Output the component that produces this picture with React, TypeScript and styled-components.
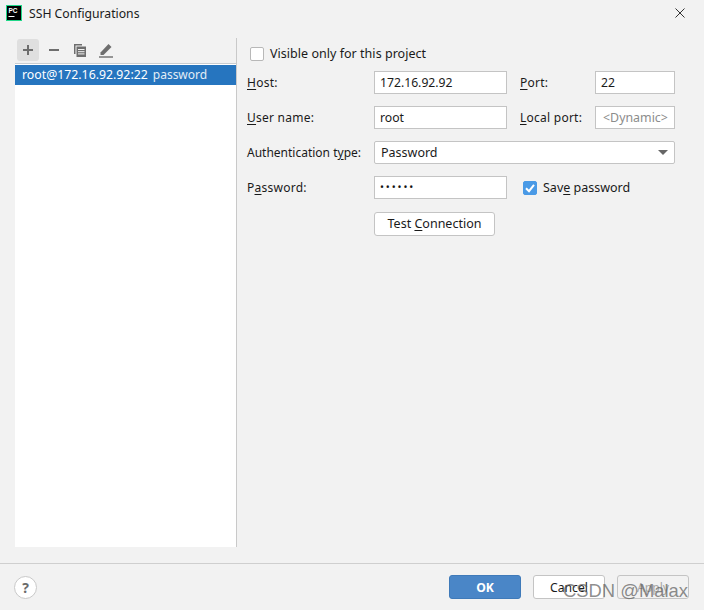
import React from "react";
import styled, { createGlobalStyle } from "styled-components";

const Global = createGlobalStyle`
  html, body { margin: 0; padding: 0; background: #f2f2f2; }
  body { font-family: "Noto Sans", "Open Sans", sans-serif; font-size: 12.5px; color: #1a1a1a; }
`;
const Dialog = styled.div`
  width: 704px; height: 610px; background: #f2f2f2; display: flex; flex-direction: column;
  position: relative; overflow: hidden;
`;
const TitleBar = styled.div`
  height: 28px; display: flex; align-items: center; padding: 0 19px 2px 6px; box-sizing: border-box; gap: 7px; flex: none;
`;
const TitleText = styled.div`
  font-size: 12.2px; flex: 1;
`;
const Body = styled.div`
  flex: none; height: 509px; margin-top: 10px; padding: 0 29px 0 15px; display: flex;
`;
const LeftPanel = styled.div`
  width: 221px; flex: none; display: flex; flex-direction: column; border-right: 1px solid #c9c9c9;
`;
const ListToolbar = styled.div`
  height: 24px; padding-left: 2px; display: flex; align-items: center; gap: 4px; flex: none;
  border-bottom: 1px solid #c9cdd1; padding-bottom: 1px;
`;
const ToolButton = styled.div<{ $active?: boolean }>`
  width: 22px; height: 22px; border-radius: 3px; display: flex; align-items: center; justify-content: center;
  background: ${(p) => (p.$active ? "#dfdfdf" : "transparent")};
`;
const List = styled.div`
  flex: 1; background: #fff; padding-top: 1px;
`;
const ListRow = styled.div`
  height: 20px; box-sizing: border-box; padding: 0 0 2px 7px; background: #2675bf; color: #fff; display: flex; align-items: center; gap: 5px;
  font-size: 12.3px; white-space: pre;
`;
const Muted = styled.span`
  color: #e3edf6; font-size: 12px;
`;
const RightPanel = styled.div`
  flex: 1; padding: 8px 0 0 10px; display: flex; flex-direction: column;
`;
const CheckRow = styled.label`
  display: flex; align-items: center; gap: 6px; height: 16px; padding-left: 3px; margin-bottom: 9px;
`;
const CheckText = styled.span`
  margin-top: -2px; letter-spacing: 0.03px;
`;
const CheckBox = styled.span<{ $checked?: boolean }>`
  width: 14px; height: 14px; border-radius: 2px; box-sizing: border-box; display: flex; align-items: center; justify-content: center; flex: none;
  background: ${(p) => (p.$checked ? "#4a9ae6" : "#fff")};
  border: 1px solid ${(p) => (p.$checked ? "#4a9ae6" : "#b8b8b8")};
`;
const FormGrid = styled.div`
  display: grid; grid-template-columns: 127px 133px 13px 75px 80px; grid-auto-rows: 23px; row-gap: 12px; align-items: center;
`;
const Label = styled.div<{ $col?: number; $wide?: boolean }>`
  grid-column: ${(p) => p.$col ?? 1}; white-space: nowrap; font-size: 12px;
  letter-spacing: ${(p) => (p.$wide ? "0.25px" : "0")};
`;
const Key = styled.span`
  text-decoration: underline; text-underline-offset: 2px;
`;
const Field = styled.div<{ $col: number; $dim?: boolean }>`
  grid-column: ${(p) => p.$col}; height: 23px; box-sizing: border-box; background: #fff; border: 1px solid #c4c4c4;
  display: flex; align-items: center;
  color: ${(p) => (p.$dim ? "#8c8c8c" : "#1a1a1a")};
  font-size: ${(p) => (p.$dim ? "12.4px" : "12.2px")};
  padding-left: ${(p) => (p.$dim ? "7px" : "5px")};
  white-space: nowrap; overflow: hidden;
`;
const Select = styled.div`
  grid-column: 2 / 6; height: 23px; box-sizing: border-box; background: #fff; border: 1px solid #c4c4c4; border-radius: 2px;
  display: flex; align-items: center; justify-content: space-between; padding: 0 6px 0 6px; font-size: 12.5px;
`;
const Arrow = styled.span`
  width: 0; height: 0; border-left: 5px solid transparent; border-right: 5px solid transparent; border-top: 5px solid #666;
`;
const SaveCheck = styled.label`
  grid-column: 4 / 6; display: flex; align-items: center; gap: 6px; padding-left: 3px; font-size: 12.5px; white-space: nowrap;
`;
const Dots = styled.span`
  letter-spacing: 1.9px; font-size: 10.5px; color: #111; margin-top: -2px;
`;
const TestButton = styled.div`
  grid-column: 2; justify-self: start; align-self: start; margin-top: 1px; width: 121px; height: 24px; box-sizing: border-box; background: #fff; border: 1px solid #c4c4c4; border-radius: 3px;
  display: flex; align-items: center; justify-content: center; font-size: 12.5px; padding-bottom: 1px;
`;
const Footer = styled.div`
  flex: 1; margin-top: 16px; border-top: 1px solid #cfcfcf; display: flex; align-items: flex-start; justify-content: space-between;
  padding: 11px 15px 0 14px;
`;
const Help = styled.div`
  width: 23px; height: 23px; box-sizing: border-box; margin-top: 1px; border-radius: 50%; background: #fff; border: 1px solid #c9c9c9; color: #6b6b6b;
  display: flex; align-items: center; justify-content: center; font-size: 14px; font-weight: 700;
`;
const Buttons = styled.div`
  display: flex; gap: 12px;
`;
const DialogButton = styled.div<{ $kind?: "primary" | "disabled" }>`
  width: 72px; height: 24px; box-sizing: border-box; border-radius: 3px; display: flex; align-items: center; justify-content: center; font-size: 12.2px;
  background: ${(p) => (p.$kind === "primary" ? "#4a86c7" : p.$kind === "disabled" ? "#f2f2f2" : "#fff")};
  border: 1px solid ${(p) => (p.$kind === "primary" ? "#3f7ab9" : "#c4c4c4")};
  color: ${(p) => (p.$kind === "primary" ? "#fff" : p.$kind === "disabled" ? "#a8a8a8" : "#1a1a1a")};
  font-weight: ${(p) => (p.$kind === "primary" ? 700 : 400)};
`;
const Watermark = styled.div`
  position: absolute; left: 563px; top: 581px; font-size: 18.4px; line-height: 20px; color: rgba(85, 85, 85, 0.68); white-space: nowrap;
  font-family: "Liberation Sans", sans-serif;
`;

const Logo = () => (
  <svg width="16" height="16" viewBox="0 0 16 16">
    <rect x="0.5" y="0.5" width="15" height="15" fill="#000" stroke="#21d789" />
    <text x="2.5" y="8" fontSize="6.5" fontWeight="700" fill="#fff" fontFamily="Liberation Sans">PC</text>
    <rect x="2.5" y="11" width="6" height="1" fill="#fff" />
  </svg>
);
const Check = () => (
  <svg width="12" height="12" viewBox="0 0 12 12"><path d="M2 6.2 L5 9.2 L10 2.8" fill="none" stroke="#fff" strokeWidth="2" /></svg>
);

export default function App() {
  return (
    <Dialog>
      <Global />
      <TitleBar>
        <Logo />
        <TitleText>SSH Configurations</TitleText>
        <svg width="10" height="10" viewBox="0 0 10 10"><path d="M0.5 0.5 L9.5 9.5 M9.5 0.5 L0.5 9.5" stroke="#333" strokeWidth="1" fill="none" /></svg>
      </TitleBar>
      <Body>
        <LeftPanel>
          <ListToolbar>
            <ToolButton $active>
              <svg width="12" height="12" viewBox="0 0 12 12"><path d="M6 1 V11 M1 6 H11" stroke="#6e6e6e" strokeWidth="2" /></svg>
            </ToolButton>
            <ToolButton>
              <svg width="12" height="12" viewBox="0 0 12 12"><path d="M1 6 H11" stroke="#6e6e6e" strokeWidth="2" /></svg>
            </ToolButton>
            <ToolButton>
              <svg width="14" height="15" viewBox="0 0 14 15"><path d="M1 1 H9 V2.5 H2.5 V11 H1 Z" fill="#6e6e6e" /><path d="M3.5 3.5 H13 V14 H3.5 Z" fill="#6e6e6e" /><path d="M5 6.5 H11.5 M5 8.7 H11.5 M5 10.9 H11.5" stroke="#f2f2f2" strokeWidth="1" /></svg>
            </ToolButton>
            <ToolButton>
              <svg width="16" height="16" viewBox="0 0 16 16"><path d="M2.5 10.5 L10.5 2 L13.5 5 L5.5 13 H2.5 Z" fill="#6e6e6e" /><path d="M1 15 H15" stroke="#6e6e6e" strokeWidth="1.4" /></svg>
            </ToolButton>
          </ListToolbar>
          <List>
            <ListRow>root@172.16.92.92:22<Muted>password</Muted></ListRow>
          </List>
        </LeftPanel>
        <RightPanel>
          <CheckRow><CheckBox /><CheckText>Visible only for this project</CheckText></CheckRow>
          <FormGrid>
            <Label $wide><Key>H</Key>ost:</Label>
            <Field $col={2}>172.16.92.92</Field>
            <Label $col={4} $wide><Key>P</Key>ort:</Label>
            <Field $col={5}>22</Field>

            <Label $wide><Key>U</Key>ser name:</Label>
            <Field $col={2}>root</Field>
            <Label $col={4} $wide><Key>L</Key>ocal port:</Label>
            <Field $col={5} $dim>&lt;Dynamic&gt;</Field>

            <Label>Authentication t<Key>y</Key>pe:</Label>
            <Select>Password<Arrow /></Select>

            <Label $wide>P<Key>a</Key>ssword:</Label>
            <Field $col={2}><Dots>••••••</Dots></Field>
            <SaveCheck><CheckBox $checked><Check /></CheckBox><span>Sav<Key>e</Key> password</span></SaveCheck>

            <TestButton><span>Test <Key>C</Key>onnection</span></TestButton>
          </FormGrid>
        </RightPanel>
      </Body>
      <Footer>
        <Help>?</Help>
        <Buttons>
          <DialogButton $kind="primary">OK</DialogButton>
          <DialogButton>Cancel</DialogButton>
          <DialogButton $kind="disabled">Apply</DialogButton>
        </Buttons>
      </Footer>
      <Watermark>CSDN @Malax</Watermark>
    </Dialog>
  );
}
